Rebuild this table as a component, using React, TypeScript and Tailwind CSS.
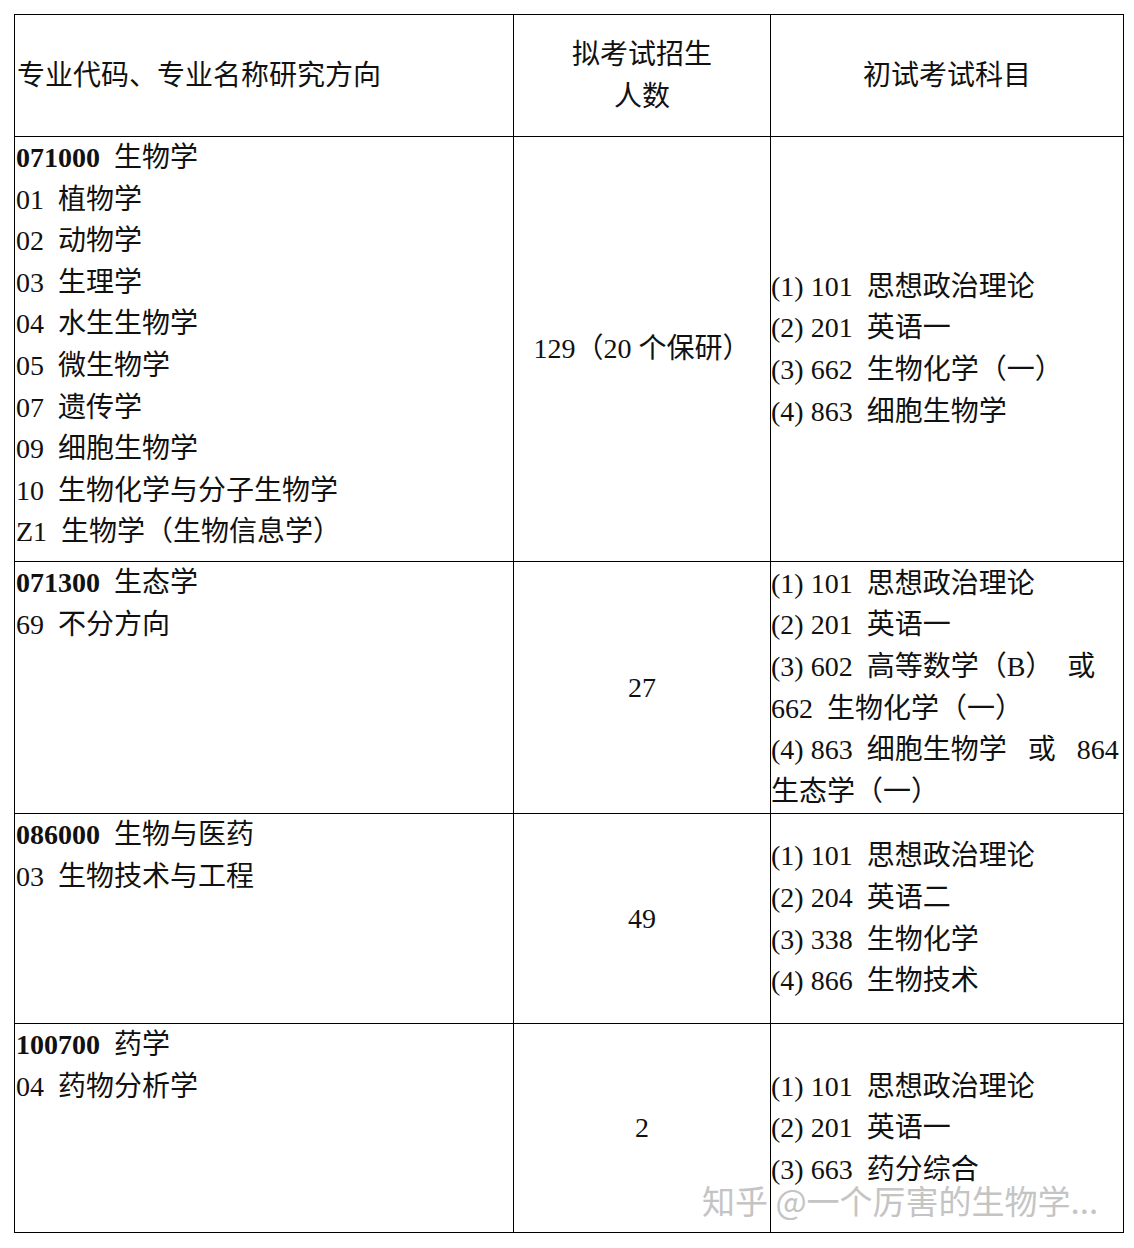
import React from "react";

const font = {
  fontFamily:
    '"Liberation Serif", "Noto Sans CJK SC", serif',
};

type Row = {
  code: string;
  name: string;
  dirs: string[];
  count: string;
  exams: string[];
  h: string;
};

const rows: Row[] = [
  {
    code: "071000",
    name: "生物学",
    dirs: [
      "01  植物学",
      "02  动物学",
      "03  生理学",
      "04  水生生物学",
      "05  微生物学",
      "07  遗传学",
      "09  细胞生物学",
      "10  生物化学与分子生物学",
      "Z1  生物学（生物信息学）",
    ],
    count: "129（20 个保研）",
    exams: [
      "(1) 101  思想政治理论",
      "(2) 201  英语一",
      "(3) 662  生物化学（一）",
      "(4) 863  细胞生物学",
    ],
    h: "h-[425px]",
  },
  {
    code: "071300",
    name: "生态学",
    dirs: ["69  不分方向"],
    count: "27",
    exams: [
      "(1) 101  思想政治理论",
      "(2) 201  英语一",
      "(3) 602  高等数学（B）  或",
      "662  生物化学（一）",
      "(4) 863  细胞生物学   或   864",
      "生态学（一）",
    ],
    h: "h-[252px]",
  },
  {
    code: "086000",
    name: "生物与医药",
    dirs: ["03  生物技术与工程"],
    count: "49",
    exams: [
      "(1) 101  思想政治理论",
      "(2) 204  英语二",
      "(3) 338  生物化学",
      "(4) 866  生物技术",
    ],
    h: "h-[210px]",
  },
  {
    code: "100700",
    name: "药学",
    dirs: ["04  药物分析学"],
    count: "2",
    exams: [
      "(1) 101  思想政治理论",
      "(2) 201  英语一",
      "(3) 663  药分综合",
    ],
    h: "h-[209px]",
  },
];

export default function App() {
  return (
    <div className="relative w-[1134px] h-[1248px] bg-white text-[#111] pt-[14px] pl-[14px]" style={font}>
      <div className="grid grid-cols-[499px_257px_353px] w-[1110px] border-t border-l border-black text-[28px] leading-[41.6px]">
        {/* header */}
        <div className="h-[122px] border-r border-b border-black flex items-center pl-[2px] whitespace-nowrap">
          专业代码、专业名称研究方向
        </div>
        <div className="h-[122px] border-r border-b border-black flex flex-col items-center justify-center">
          <span>拟考试招生</span>
          <span>人数</span>
        </div>
        <div className="h-[122px] border-r border-b border-black flex items-center justify-center">
          初试考试科目
        </div>

        {rows.map((r) => (
          <React.Fragment key={r.code}>
            <div className={`${r.h} border-r border-b border-black flex flex-col pl-[1px] whitespace-pre`}>
              <div>
                <span className="font-bold">{r.code}</span>
                {"  "}
                {r.name}
              </div>
              {r.dirs.map((d) => (
                <div key={d}>{d}</div>
              ))}
            </div>
            <div className={`${r.h} border-r border-b border-black flex items-center justify-center whitespace-pre`}>
              {r.count}
            </div>
            <div className={`${r.h} border-r border-b border-black flex flex-col justify-center whitespace-pre overflow-hidden`}>
              {r.exams.map((e) => (
                <div key={e}>{e}</div>
              ))}
            </div>
          </React.Fragment>
        ))}
      </div>

      {/* zhihu watermark */}
      <div
        className="absolute left-[702px] top-[1183px] text-[33px] leading-[34px] whitespace-pre text-[#c4c4c4]"
        style={{
          fontFamily: '"Noto Sans CJK SC", "Noto Sans", sans-serif',
          textShadow: "0 0 2px #fff, 0 0 2px #fff",
        }}
      >
        知乎 @一个厉害的生物学...
      </div>
    </div>
  );
}
